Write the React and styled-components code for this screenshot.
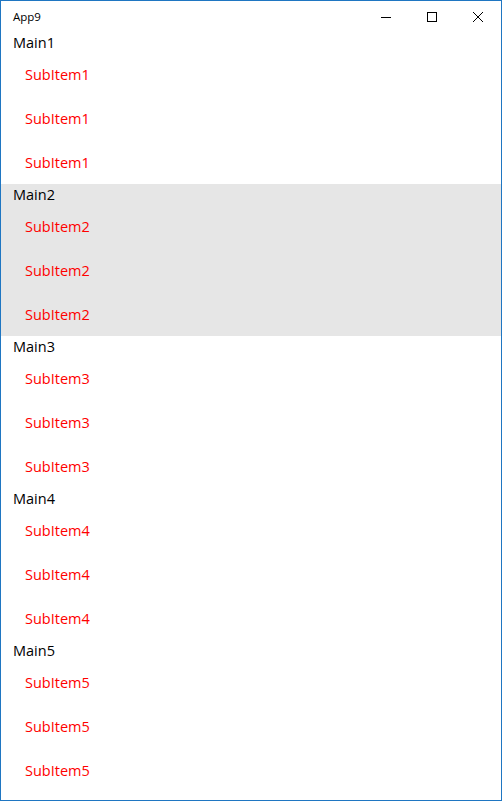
import styled, { createGlobalStyle } from "styled-components";

const groups = [1, 2, 3, 4, 5].map((n) => ({
  title: `Main${n}`,
  items: [`SubItem${n}`, `SubItem${n}`, `SubItem${n}`],
}));

const App = () => {
  return (
    <Window>
      <GlobalStyle />
      <TitleBar>
        <Title>App9</Title>
        <Controls>
          <CaptionButton aria-label="Minimize">
            <svg width="10" height="10" viewBox="0 0 10 10">
              <path d="M0 5.5H10" stroke="#000" strokeWidth="1" />
            </svg>
          </CaptionButton>
          <CaptionButton aria-label="Maximize">
            <svg width="10" height="10" viewBox="0 0 10 10">
              <rect x="0.5" y="0.5" width="9" height="9" fill="none" stroke="#000" strokeWidth="1" />
            </svg>
          </CaptionButton>
          <CaptionButton aria-label="Close">
            <svg width="10" height="10" viewBox="0 0 10 10">
              <path d="M0 0L10 10M10 0L0 10" stroke="#000" strokeWidth="1" />
            </svg>
          </CaptionButton>
        </Controls>
      </TitleBar>
      <List>
        {groups.map((group, i) => (
          <Group key={group.title} $selected={i === 1}>
            <Header>{group.title}</Header>
            {group.items.map((item, j) => (
              <SubRow key={j}>{item}</SubRow>
            ))}
          </Group>
        ))}
      </List>
    </Window>
  );
};

export default App;

/*
Styles
*/

const GlobalStyle = createGlobalStyle`
  html, body {
    margin: 0;
    padding: 0;
    background: #fff;
  }
  body {
    font-family: "Open Sans", "Noto Sans", sans-serif;
  }
`;

const Window = styled.div`
  box-sizing: border-box;
  width: 502px;
  height: 801px;
  border: 1px solid #1f76c2;
  background: #fff;
  display: flex;
  flex-direction: column;
  overflow: hidden;
`;

const TitleBar = styled.div`
  height: 31px;
  display: flex;
  align-items: center;
  justify-content: space-between;
  flex-shrink: 0;
`;

const Title = styled.span`
  padding-left: 12px;
  font-size: 11.5px;
  color: #000;
  line-height: 1;
`;

const Controls = styled.div`
  display: flex;
  height: 100%;
`;

const CaptionButton = styled.div`
  width: 46px;
  height: 100%;
  display: flex;
  align-items: center;
  justify-content: center;
`;

const List = styled.div`
  display: flex;
  flex-direction: column;
`;

const Group = styled.div`
  display: flex;
  flex-direction: column;
  background: ${(p) => (p.$selected ? "#e6e6e6" : "transparent")};
`;

const Header = styled.div`
  box-sizing: border-box;
  height: 20px;
  line-height: 19px;
  padding: 1px 0 0 12px;
  font-size: 14.5px;
  color: #000;
`;

const SubRow = styled.div`
  height: 44px;
  display: flex;
  align-items: center;
  padding-left: 24px;
  font-size: 14.5px;
  color: #f00;
`;
